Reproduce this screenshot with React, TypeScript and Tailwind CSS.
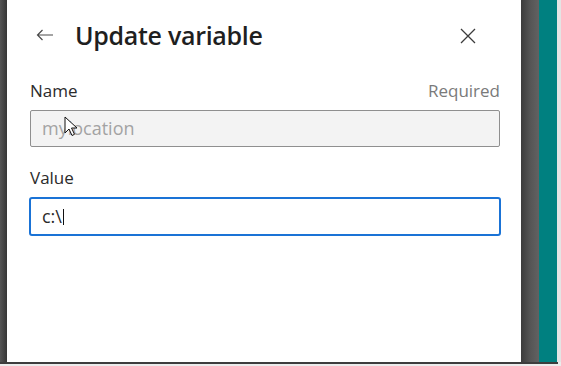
import React from "react";

const font = { fontFamily: '"Open Sans", "Noto Sans", sans-serif' };

const BackArrow = () => (
  <svg width="18" height="12" viewBox="0 0 18 12" fill="none" stroke="#4a4a4a" strokeWidth="1.2">
    <path d="M17 6H1.5M6.5 1L1.5 6l5 5" />
  </svg>
);

const CloseIcon = () => (
  <svg width="16" height="16" viewBox="0 0 16 16" fill="none" stroke="#3b3b3b" strokeWidth="1.3">
    <path d="M1 1l14 14M15 1L1 15" />
  </svg>
);

const Pointer = () => (
  <svg width="14" height="21" viewBox="0 0 14 21" className="absolute left-[64px] top-[116px]">
    <path d="M1 1v16l4-4 3 6.5 2.5-1.2-3-6.3H13z" fill="#fff" stroke="#111" strokeWidth="1" strokeLinejoin="round" />
  </svg>
);

export default function App() {
  return (
    <div className="relative w-[561px] h-[366px] bg-[#ececec] overflow-hidden" style={font}>
      <div className="flex h-[362px]">
        {/* left frame */}
        <div className="w-[7px] bg-gradient-to-r from-[#555] to-[#363636]" />

        {/* dialog panel */}
        <div className="w-[514px] bg-white pl-[23px] pr-[21px]">
          <div className="flex items-center h-[38px] mt-[16px]">
            <button className="ml-[6px] w-[39px] flex items-center">
              <BackArrow />
            </button>
            <h1 className="text-[25px] font-semibold text-[#1f1f1f] leading-none tracking-[-0.3px]">Update variable</h1>
            <button className="ml-auto mr-[24px] mt-[2px] flex items-center">
              <CloseIcon />
            </button>
          </div>

          <div className="flex justify-between items-center mt-[25px] h-[24px]">
            <span className="text-[17px] text-[#2b2b2b]">Name</span>
            <span className="text-[17px] text-[#7a7a7a]">Required</span>
          </div>
          <div className="mt-[7px] h-[37px] rounded-[2px] border border-[#8f8f8f] bg-[#f3f3f3] flex items-center px-[11px]">
            <span className="text-[18px] text-[#a3a3a3]">mylocation</span>
          </div>

          <div className="mt-[19px] h-[24px] flex items-center">
            <span className="text-[17px] text-[#2b2b2b]">Value</span>
          </div>
          <div className="mt-[7px] -mx-[1px] h-[39px] rounded-[3px] border-2 border-[#1a73d6] bg-white flex items-center px-[11px]">
            <span className="text-[18px] text-[#2b2b2b]">c:\</span>
            <span className="w-[1.5px] h-[16px] bg-[#111] ml-[1px]" />
          </div>
        </div>

        {/* right frame */}
        <div className="w-[18px] bg-gradient-to-r from-[#3c3c3c] via-[#555] to-[#626262]" />
        <div className="w-[18px] bg-[#008080]" />
        <div className="flex-1 bg-[#e4e4e4]" />
      </div>
      <div className="h-[2px] w-[558px] bg-[#3d3d3d]" />

      <Pointer />
    </div>
  );
}
